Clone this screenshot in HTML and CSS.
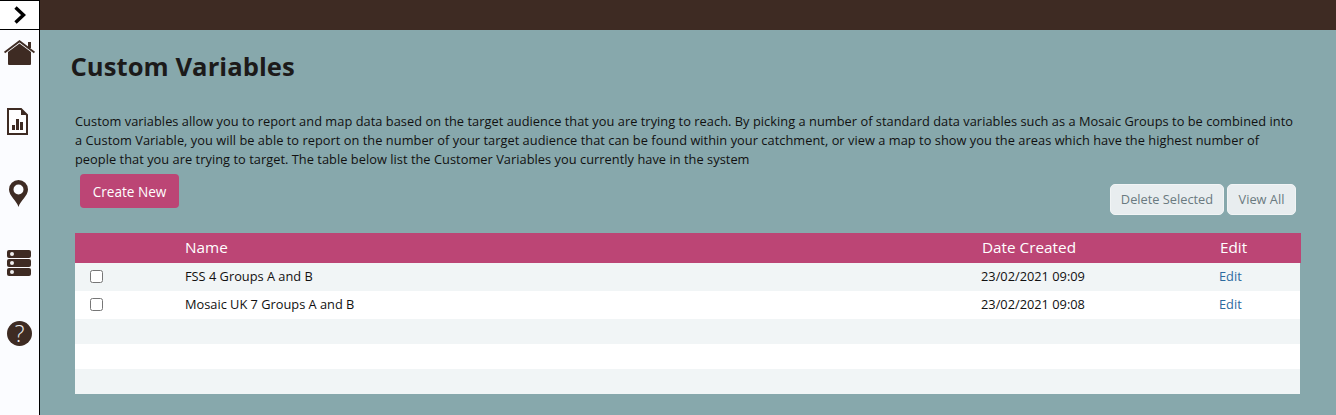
FILE: index.html
```html
<!DOCTYPE html>
<html lang="en">
<head>
<meta charset="utf-8">
<title>Custom Variables</title>
<link rel="stylesheet" href="styles.css">
</head>
<body>
<div class="app">
  <nav class="sidebar">
    <div class="toggle">
      <svg width="12" height="18" viewBox="0 0 12 18"><path d="M1.500 1.500 L9.500 9 L1.500 16.500" fill="none" stroke="#000" stroke-width="3.400"/></svg>
    </div>
    <div class="nav-items">
      <svg class="i-home" width="31" height="25" viewBox="0 0 31 25"><path d="M4 12 L15.500 3.500 L27 12 V24 Q27 25 26 25 H5 Q4 25 4 24 Z" fill="#3e2b23"/><path d="M0.500 12.500 L15.500 1.300 L30.500 12.500" fill="none" stroke="#3e2b23" stroke-width="2"/><rect x="24" y="2" width="3" height="6" fill="#3e2b23"/></svg>
      <svg class="i-doc" width="21" height="27" viewBox="0 0 21 27"><path d="M1 1 H14 L20 7 V26 H1 Z" fill="#fff" stroke="#3e2b23" stroke-width="2"/><path d="M14 1 V7 H20 Z" fill="#3e2b23"/><path d="M5 17 h3 v5 h-3 z M9 11 h3 v11 h-3 z M13 14 h3 v8 h-3 z" fill="#3e2b23"/></svg>
      <svg class="i-pin" width="19" height="27" viewBox="0 0 19 27"><path fill-rule="evenodd" d="M9.500 27 C8 21 0 16 0 9.500 A9.500 9.500 0 0 1 19 9.500 C19 16 11 21 9.500 27 Z M9.500 4.500 A5 5 0 1 0 9.500 14.500 A5 5 0 1 0 9.500 4.500 Z" fill="#3e2b23"/></svg>
      <svg class="i-db" width="24" height="26" viewBox="0 0 24 26"><rect y="0" width="24" height="8" rx="2" fill="#3e2b23"/><rect y="9" width="24" height="8" rx="2" fill="#3e2b23"/><rect y="18" width="24" height="8" rx="2" fill="#3e2b23"/><circle cx="5" cy="4" r="2" fill="#eee"/><circle cx="5" cy="13" r="2" fill="#eee"/><circle cx="5" cy="22" r="2" fill="#eee"/></svg>
      <div class="i-help">?</div>
    </div>
  </nav>
  <div class="content">
    <div class="topbar"></div>
    <main class="main">
      <h1 class="title">Custom Variables</h1>
      <p class="intro">Custom variables allow you to report and map data based on the target audience that you are trying to reach. By picking a number of standard data variables such as a Mosaic Groups to be combined into a Custom Variable, you will be able to report on the number of your target audience that can be found within your catchment, or view a map to show you the areas which have the highest number of people that you are trying to target. The table below list the Customer Variables you currently have in the system</p>
      <div class="actions">
        <button class="btn-primary">Create New</button>
        <div class="actions-right">
          <button class="btn-muted btn-delete">Delete Selected</button>
          <button class="btn-muted btn-view">View All</button>
        </div>
      </div>
      <div class="table">
        <div class="row head"><span class="c-check"></span><span class="c-name">Name</span><span class="c-date">Date Created</span><span class="c-edit">Edit</span></div>
        <div class="row data odd"><span class="c-check"><span class="box"></span></span><span class="c-name">FSS 4 Groups A and B</span><span class="c-date">23/02/2021 09:09</span><span class="c-edit"><a class="link">Edit</a></span></div>
        <div class="row data"><span class="c-check"><span class="box"></span></span><span class="c-name">Mosaic UK 7 Groups A and B</span><span class="c-date">23/02/2021 09:08</span><span class="c-edit"><a class="link">Edit</a></span></div>
        <div class="row blank odd"></div>
        <div class="row blank"></div>
        <div class="row blank odd"></div>
      </div>
    </main>
  </div>
</div>
</body>
</html>
```
FILE: styles.css
```css
* { box-sizing: border-box; }
html, body { margin: 0; height: 100%; overflow: hidden; }
body { font-family: "Open Sans", sans-serif; font-size: 12px; color: #111; }
.app { display: flex; height: 415px; }
.sidebar { width: 40px; flex: none; background: #fbfcff; border-right: 1px solid #000; }
.toggle { height: 30px; border-top: 1px solid #000; border-bottom: 1px solid #000; background: #fff; display: flex; align-items: center; justify-content: center; }
.nav-items { display: flex; flex-direction: column; align-items: center; padding-top: 10px; }
.i-doc { margin-top: 43px; margin-right: 4px; }
.i-pin { margin-top: 45px; margin-right: 2px; }
.i-db { margin-top: 43px; margin-right: 1px; }
.i-help { margin-top: 45px; width: 25px; height: 25px; border-radius: 50%; background: #3e2b23; color: #eee; font-size: 23px; font-weight: 300; line-height: 24px; text-align: center; }
.content { flex: 1; min-width: 0; display: flex; flex-direction: column; }
.topbar { height: 30px; background: #3e2b23; flex: none; }
.main { flex: 1; background: #87a8ac; padding: 19px 35px 0 31px; }
.title { margin: 0 0 0 -0.5px; font-size: 25.600px; letter-spacing: 0.05px; line-height: 36px; font-weight: 700; color: #1c1a1a; }
.intro { margin: 27px 0 0 4px; font-size: 12.800px; letter-spacing: 0.04px; line-height: 19px; width: 1220px; color: #111; }
.actions { display: flex; justify-content: space-between; margin-top: 5px; height: 59px; padding-left: 9px; padding-right: 5px; }
.btn-primary { height: 34px; width: 99px; border: 0; border-radius: 4px; background: #bc4575; color: #fff; font: 500 13.600px "Open Sans", sans-serif; padding: 0; }
.actions-right { display: flex; gap: 3px; padding-top: 10px; align-items: flex-start; }
.btn-muted { height: 31px; border: 1px solid #f1f4f5; border-radius: 5px; background: #e8edef; color: #6a7a80; font: 12.800px "Open Sans", sans-serif; padding: 0 0 2px; }
.btn-delete { width: 114px; }
.btn-view { width: 69px; }
.table { margin-left: 4px; width: 1226px; }
.row { display: flex; align-items: center; height: 25px; background: #fff; width: 1225px; font-size: 12.800px; }
.odd { background: #f1f5f6; }
.head { height: 30px; padding-bottom: 2px; background: #bc4575; color: #fff; font-size: 15.300px; width: 1226px; }
.data { height: 28px; padding-bottom: 2px; }
.c-check { width: 110px; padding-left: 15px; display: flex; }
.c-name { width: 796px; }
.head .c-name { width: 797px; }
.c-date { width: 238px; }
.box { width: 13px; height: 13px; border: 1px solid #767676; border-radius: 2.500px; background: #fff; }
.link { color: #2d6a9f; }
```
